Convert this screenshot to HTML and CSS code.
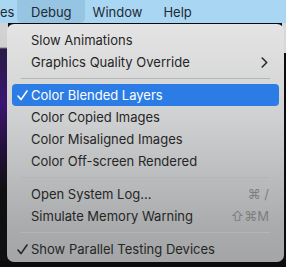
FILE: index.html
```html
<!DOCTYPE html>
<html>
<head>
<meta charset="utf-8">
<link rel="stylesheet" href="styles.css">
</head>
<body>
<div class="menubar">
  <span class="mb-item mb-es">es</span>
  <span class="mb-item mb-active">Debug</span>
  <span class="mb-item mb-window">Window</span>
  <span class="mb-item mb-help">Help</span>
</div>
<div class="desk">
  <div class="strip-left"></div>
  <div class="strip-right"></div>
  <div class="menu">
    <div class="row"><span class="check"></span><span class="label">Slow Animations</span></div>
    <div class="row"><span class="check"></span><span class="label">Graphics Quality Override</span>
      <svg class="chev" width="7" height="11" viewBox="0 0 7 11"><path d="M1.2 1 L5.7 5.5 L1.2 10" fill="none" stroke="#2a2a2a" stroke-width="1.6" stroke-linecap="round" stroke-linejoin="round"/></svg></div>
    <div class="sep"></div>
    <div class="row active"><span class="check"><svg width="11" height="11" viewBox="0 0 11 11"><path d="M1 6 L4 9.6 L10 1" fill="none" stroke="#fff" stroke-width="1.6" stroke-linecap="round" stroke-linejoin="round"/></svg></span><span class="label">Color Blended Layers</span></div>
    <div class="row"><span class="check"></span><span class="label">Color Copied Images</span></div>
    <div class="row"><span class="check"></span><span class="label">Color Misaligned Images</span></div>
    <div class="row"><span class="check"></span><span class="label">Color Off-screen Rendered</span></div>
    <div class="sep"></div>
    <div class="row"><span class="check"></span><span class="label">Open System Log...</span><span class="key">⌘ /</span></div>
    <div class="row"><span class="check"></span><span class="label">Simulate Memory Warning</span><span class="key">⇧⌘M</span></div>
    <div class="sep"></div>
    <div class="row"><span class="check"><svg width="11" height="11" viewBox="0 0 11 11"><path d="M1 6 L4 9.6 L10 1" fill="none" stroke="#262626" stroke-width="1.6" stroke-linecap="round" stroke-linejoin="round"/></svg></span><span class="label">Show Parallel Testing Devices</span></div>
  </div>
</div>
</body>
</html>
```
FILE: styles.css
```css
html, body {
  margin: 0;
  padding: 0;
}
body {
  width: 286px;
  height: 267px;
  overflow: hidden;
  background: #0c0c0e;
  font-family: Inter, "Noto Sans", sans-serif;
  font-size: 13px;
  color: #262626;
}
.menubar {
  height: 23px;
  background: #a9d6f3;
  display: flex;
  align-items: stretch;
}
.mb-item {
  display: flex;
  align-items: center;
  color: #1f2a33;
}
.mb-es {
  width: 17px;
}
.mb-active {
  background: #96c5e4;
  border-radius: 0 0 5px 5px;
  padding: 0 13px 0 14px;
}
.mb-window {
  padding: 0 10px 0 8px;
}
.mb-help {
  padding: 0 10px 0 11px;
}
.desk {
  position: relative;
  height: 244px;
}
.strip-left {
  position: absolute;
  left: 0;
  top: 0;
  width: 8px;
  height: 238px;
  background: linear-gradient(#d3d3d3 0, #cfcfcf 24px, #2a1a48 26px, #3b1670 80px, #221035 130px, #101010 170px);
}
.strip-right {
  position: absolute;
  right: 0;
  top: 0;
  width: 4px;
  height: 30px;
  background: #d8d8d8;
}
.menu {
  position: absolute;
  left: 7px;
  top: 1px;
  width: 277px;
  height: 238px;
  box-sizing: border-box;
  border-radius: 7px;
  background: linear-gradient(#e4e4e4, #cfd0d1 40%, #a9abac 85%, #a3a5a6);
  padding: 5px 5px;
  display: flex;
  flex-direction: column;
}
.row {
  flex: none;
  height: 22px;
  display: flex;
  align-items: center;
  border-radius: 4px;
  padding: 0 10px 0 5px;
}
.check {
  width: 14px;
  flex: none;
  display: flex;
  align-items: center;
}
.label {
  flex: 1;
}
.active {
  background: #2b7de5;
  color: #fff;
}
.chev {
  margin-right: 1px;
}
.key {
  color: #7c7e80;
  margin-right: 0;
}
.sep {
  flex: none;
  height: 1px;
  background: #b4b5b6;
  margin: 5px 9px 5px 9px;
}
```
